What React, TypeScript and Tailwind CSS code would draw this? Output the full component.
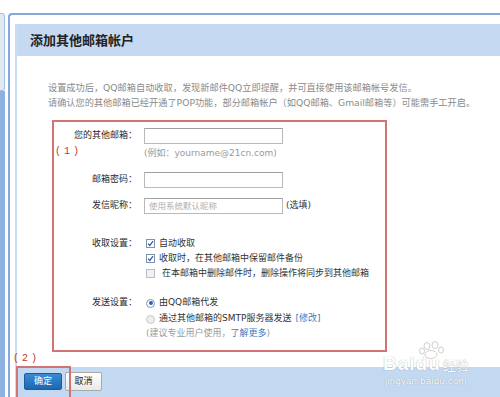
import React from 'react';

const font = 'font-["DejaVu_Sans","Noto_Sans_CJK_SC",sans-serif]';

const CheckBox = ({ checked }: { checked: boolean }) => (
    <span
        className={
            'w-[9px] h-[9px] border flex items-center justify-center shrink-0 ' +
            (checked ? 'border-[#7f93ad] bg-white' : 'border-[#b8bec7] bg-[#f1f1f1]')
        }
    >
        {checked && (
            <svg width="7" height="7" viewBox="0 0 7 7">
                <path d="M1 3.6 L2.8 5.4 L6 1.2" fill="none" stroke="#2c5fb0" strokeWidth="1.3" />
            </svg>
        )}
    </span>
);

const Radio = ({ checked }: { checked: boolean }) => (
    <span
        className={
            'w-[9px] h-[9px] rounded-full border flex items-center justify-center shrink-0 ' +
            (checked ? 'border-[#7f93ad] bg-white' : 'border-[#c3c8cf] bg-[#eeeeee]')
        }
    >
        {checked && <span className="w-[4px] h-[4px] rounded-full bg-[#2a62b8]" />}
    </span>
);

const Input = ({ placeholder }: { placeholder?: string }) => (
    <div className="w-[139px] h-[16px] border border-[#b9b9b9] border-t-[#a0a0a0] bg-white flex items-center pl-[4px] text-[#b0b0b0] text-[8.5px]">
        {placeholder}
    </div>
);

const Row = ({ label, children, className = '' }: { label?: React.ReactNode; children: React.ReactNode; className?: string }) => (
    <div className={'flex items-center gap-[7px] ' + className}>
        <div className="w-[83px] text-right text-[#2a2a2a] shrink-0">{label}</div>
        <div className="flex items-center">{children}</div>
    </div>
);

const App = () => {
    return (
        <div className={'relative w-[500px] h-[397px] overflow-hidden bg-white flex flex-col ' + font}>
            <div className="h-[13px] shrink-0" />
            <div className="flex flex-1">
                {/* left rail */}
                <div className="w-[5px] flex flex-col shrink-0">
                    <div className="h-[78px] bg-[#e2e9f1] border-r border-t border-b border-[#a5c0e6] rounded-tr-[3px] rounded-br-[3px]" />
                    <div className="flex-1 bg-[#8db1e0]" />
                </div>
                <div className="w-[3px] shrink-0" />

                <div className="flex-1 flex flex-col border-l-2 border-t-2 border-[#84aadd] rounded-tl-[4px] pt-[9px] pl-[5px]">
                    <div className="flex-1 flex flex-col border-l-2 border-[#c9dcf1]">
                        {/* header */}
                        <div className="h-[32px] bg-[#c5daf2] flex items-center pl-[13px]">
                            <span className="text-[13px] font-bold text-[#222] font-['Noto_Sans_CJK_SC',sans-serif]">
                                添加其他邮箱帐户
                            </span>
                        </div>

                        {/* body */}
                        <div className="pt-[24px] pl-[31px] pb-[15px]">
                            <div className="text-[9.2px] leading-[15px] text-[#8a8a8a]">
                                <div>设置成功后，QQ邮箱自动收取，发现新邮件QQ立即提醒，并可直接使用该邮箱帐号发信。</div>
                                <div>请确认您的其他邮箱已经开通了POP功能，部分邮箱帐户（如QQ邮箱、Gmail邮箱等）可能需手工开启。</div>
                            </div>

                            <div className="mt-[10px] ml-[4px] w-[335px] border-2 border-[#d07476] pt-[6px] pb-[9px] text-[9px]">
                                <Row label="您的其他邮箱：">
                                    <Input />
                                </Row>
                                <Row
                                    className="mt-[3px] h-[14px]"
                                    label={
                                        <div className="text-left pl-[1px] text-[#c0392b] -mt-[5px] tracking-[3px] font-['Liberation_Mono',monospace] text-[10px]">
                                            (1)
                                        </div>
                                    }
                                >
                                    <span className="text-[#9a9a9a]">(例如：yourname@21cn.com)</span>
                                </Row>
                                <Row className="mt-[11px]" label="邮箱密码：">
                                    <Input />
                                </Row>
                                <Row className="mt-[10px]" label="发信昵称：">
                                    <Input placeholder="使用系统默认昵称" />
                                    <span className="ml-[3px] text-[#333]">(选填)</span>
                                </Row>

                                <Row className="mt-[22px] h-[15px]" label="收取设置：">
                                    <span className="ml-[2px] flex items-center gap-[4px] text-[#333]">
                                        <CheckBox checked />
                                        自动收取
                                    </span>
                                </Row>
                                <Row className="h-[15px]">
                                    <span className="ml-[2px] flex items-center gap-[4px] text-[#333]">
                                        <CheckBox checked />
                                        收取时，在其他邮箱中保留邮件备份
                                    </span>
                                </Row>
                                <Row className="h-[15px]">
                                    <span className="ml-[2px] flex items-center gap-[7px] text-[#333]">
                                        <CheckBox checked={false} />
                                        在本邮箱中删除邮件时，删除操作将同步到其他邮箱
                                    </span>
                                </Row>

                                <Row className="mt-[14px] h-[16px]" label="发送设置：">
                                    <span className="ml-[2px] flex items-center gap-[4px] text-[#333]">
                                        <Radio checked />
                                        由QQ邮箱代发
                                    </span>
                                </Row>
                                <Row className="h-[16px]">
                                    <span className="ml-[2px] flex items-center gap-[4px] text-[#333]">
                                        <Radio checked={false} />
                                        通过其他邮箱的SMTP服务器发送
                                        <span className="text-[#3f78c0]">[修改]</span>
                                    </span>
                                </Row>
                                <Row className="h-[14px]">
                                    <span className="ml-[2px] text-[#9a9a9a]">
                                        (建议专业用户使用，<span className="text-[#3f78c0]">了解更多</span>)
                                    </span>
                                </Row>
                            </div>
                        </div>

                        {/* footer */}
                        <div className="flex-1 bg-[#c3d8f1] pl-[7px] pt-[6px] flex items-start gap-[3px]">
                            <button className="w-[38px] h-[17px] rounded-[2px] bg-gradient-to-b from-[#3a8ad4] to-[#1c67b2] border border-[#1a5c9e] text-white text-[9px] flex items-center justify-center">
                                确定
                            </button>
                            <button className="-mt-[1px] w-[37px] h-[19px] rounded-[2px] bg-gradient-to-b from-white to-[#e9e9e9] border border-[#a9a9a9] text-[#222] text-[9px] flex items-center justify-center">
                                取消
                            </button>
                        </div>
                    </div>
                </div>
            </div>

            {/* annotation (2) */}
            <div className="absolute left-[13px] top-[351px] text-[10px] tracking-[3px] text-[#c0392b] font-['Liberation_Mono',monospace]">
                (2)
            </div>
            <div className="absolute left-[16px] top-[366px] w-[55px] h-[40px] border-2 border-[#d07476]" />

            {/* watermark */}
            <div className="absolute left-[383px] top-[341px] flex flex-col items-start text-white [text-shadow:0_0_1px_rgba(0,0,0,0.4)]">
                <svg className="ml-[35px]" width="30" height="18" viewBox="0 0 30 18">
                    <g fill="white" stroke="#cfcfcf" strokeWidth="1">
                        <ellipse cx="9" cy="5" rx="3" ry="3.5" />
                        <ellipse cx="17" cy="4" rx="3" ry="3.5" />
                        <ellipse cx="4" cy="10" rx="2.5" ry="3" />
                        <ellipse cx="23" cy="9" rx="2.5" ry="3" />
                        <ellipse cx="13" cy="13.5" rx="6" ry="4" />
                    </g>
                </svg>
                <div className="-mt-[4px] flex items-end font-['Liberation_Sans',sans-serif]">
                    <span className="text-[19px] font-bold leading-[17px] tracking-[1px]">Baidu</span>
                    <span className="ml-[2px] text-[13px] leading-[15px] font-['Noto_Sans_CJK_SC',sans-serif]">经验</span>
                </div>
                <div className="mt-[4px] ml-[2px] text-[9.5px] leading-[10px] tracking-[0.3px] font-['Liberation_Sans',sans-serif]">
                    jingyan.baidu.com
                </div>
            </div>
        </div>
    );
};

export default App;
